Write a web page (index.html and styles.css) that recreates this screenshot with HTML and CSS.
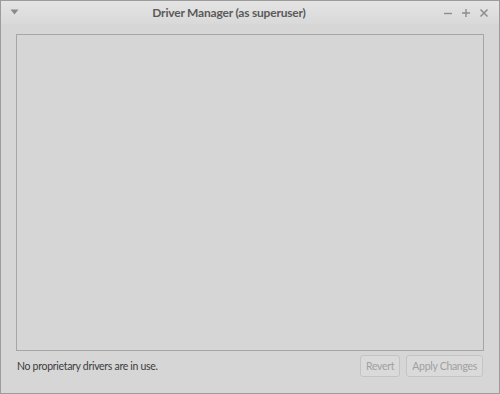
FILE: index.html
```html
<!DOCTYPE html>
<html lang="en">
<head>
    <meta charset="UTF-8">
    <title>Driver Manager (as superuser)</title>
    <link rel="stylesheet" href="styles.css">
</head>
<body>
    <div class="janela">
        <header class="titulo">
            <span class="menu">
                <svg width="9" height="6" viewBox="0 0 9 6"><path d="M0.5 0.5 H8.5 L4.5 5.5 Z" fill="#8a8a8a"/></svg>
            </span>
            <h1>Driver Manager (as superuser)</h1>
            <nav class="controles">
                <svg width="10" height="10" viewBox="0 0 10 10"><path d="M1 5.5 H9" stroke="#8d8d8d" stroke-width="1.4"/></svg>
                <svg width="10" height="10" viewBox="0 0 10 10"><path d="M1 5 H9 M5 1 V9" stroke="#8d8d8d" stroke-width="1.4"/></svg>
                <svg width="10" height="10" viewBox="0 0 10 10"><path d="M1.5 1.5 L8.5 8.5 M8.5 1.5 L1.5 8.5" stroke="#8d8d8d" stroke-width="1.5"/></svg>
            </nav>
        </header>
        <main class="conteudo">
            <section class="lista"></section>
            <footer class="rodape">
                <p>No proprietary drivers are in use.</p>
                <div class="botoes">
                    <button disabled>Revert</button>
                    <button disabled>Apply Changes</button>
                </div>
            </footer>
        </main>
    </div>
</body>
</html>
```

FILE: styles.css
```css
html, body {
    margin: 0;
    height: 100%;
}

body {
    background: #d6d6d6;
    font-family: Lato, "Noto Sans", sans-serif;
}

.janela {
    box-sizing: border-box;
    height: 394px;
    width: 500px;
    display: flex;
    flex-direction: column;
    border: 1px solid #9c9c9c;
    background: #d6d6d6;
}

.titulo {
    height: 23px;
    display: flex;
    align-items: center;
    padding: 0 10px 0 9px;
    background: linear-gradient(#e4e4e4, #d9d9d9);

    .menu {
        width: 60px;
        display: flex;
        svg { margin-top: -1px; }
    }

    h1 {
        flex: 1;
        margin: 0;
        text-align: center;
        font-size: 12px;
        letter-spacing: -0.2px;
        font-weight: bold;
        color: #5a5a5a;
        padding-right: 41px;
    }

    .controles {
        width: 60px;
        display: flex;
        justify-content: flex-end;
        gap: 8px;
    }
}

.conteudo {
    flex: 1;
    display: flex;
    flex-direction: column;
    padding: 10px 15px 0 15px;

    .lista {
        height: 315px;
        border: 1px solid #a6a6a6;
        background: #d6d6d6;
    }
}

.rodape {
    display: flex;
    align-items: center;
    justify-content: space-between;
    padding: 4px 0 0 0;

    p {
        margin: 0 0 0 1px;
        font-size: 10.5px;
        letter-spacing: -0.3px;
        color: #3c3c3c;
    }

    .botoes {
        display: flex;
        gap: 6px;
        margin-right: 1px;
    }

    button {
        height: 22px;
        padding: 0 5px;
        font-family: inherit;
        font-size: 10.5px;
        letter-spacing: -0.3px;
        color: #a0a0a0;
        background: #dadada;
        border: 1px solid #c4c4c4;
        border-radius: 3px;
    }
}
```
